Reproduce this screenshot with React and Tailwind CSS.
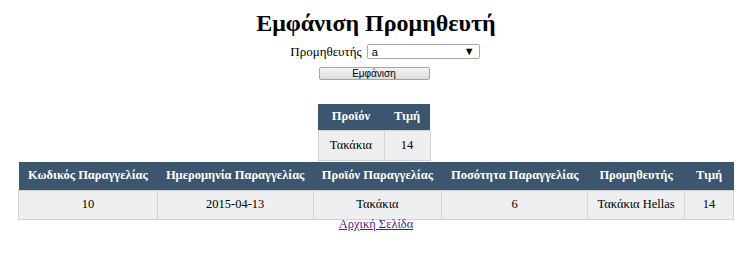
import React from "react";

const serif = "font-['Liberation_Serif','Times_New_Roman',serif]";

const orderCols = [
  { label: "Κωδικός Παραγγελίας", w: "w-[139px]" },
  { label: "Ημερομηνία Παραγγελίας", w: "w-[156px]" },
  { label: "Προϊόν Παραγγελίας", w: "w-[129px]" },
  { label: "Ποσότητα Παραγγελίας", w: "w-[146px]" },
  { label: "Προμηθευτής", w: "w-[97px]" },
  { label: "Τιμή", w: "w-[49px]" },
];

const orderRow = ["10", "2015-04-13", "Τακάκια", "6", "Τακάκια Hellas", "14"];

const App = () => {
  return (
    <div className={`${serif} min-h-screen bg-white text-black pl-[18px] pr-[7px] pt-[8px]`}>
      <h1 className="text-center text-[24px] font-bold leading-[30px]">
        Εμφάνιση Προμηθευτή
      </h1>

      <div className="mt-[4px] flex items-center justify-center pl-[18px] gap-[5px] text-[13px]">
        <span>Προμηθευτής</span>
        <div className="relative w-[113px] h-[15px] border border-[#a9a9a9] rounded-[2px] bg-white flex items-center px-[4px] font-['Liberation_Sans',Arial,sans-serif] text-[11px]">
          <span>a</span>
          <span className="absolute right-[4px] top-[0px] text-[11px] leading-[13px]">▼</span>
        </div>
      </div>

      <div className="mt-[5px] flex justify-center pr-[4px]">
        <button
          type="button"
          className="w-[111px] h-[13px] border border-[#a6a6a6] rounded-[2px] bg-gradient-to-b from-[#f4f4f4] to-[#dedede] font-['Liberation_Sans',Arial,sans-serif] text-[10px] leading-[11px] text-black"
        >
          Εμφάνιση
        </button>
      </div>

      <div className="mt-[24px] flex justify-center pr-[4px]">
        <table className={`${serif} border-collapse text-[12.5px]`}>
          <thead>
            <tr className="bg-[#3b566e] text-white h-[27px]">
              <th className="w-[66px] font-bold">Προϊόν</th>
              <th className="w-[46px] font-bold">Τιμή</th>
            </tr>
          </thead>
          <tbody>
            <tr className="bg-[#efeff1] h-[30px]">
              <td className="text-center border border-[#d3d3d3]">Τακάκια</td>
              <td className="text-center border border-[#d3d3d3]">14</td>
            </tr>
          </tbody>
        </table>
      </div>

      <table className={`${serif} mt-[1px] w-[716px] border-collapse text-[12.5px]`}>
        <thead>
          <tr className="bg-[#3b566e] text-white h-[28px]">
            {orderCols.map((c) => (
              <th key={c.label} className={`${c.w} font-bold text-center`}>
                {c.label}
              </th>
            ))}
          </tr>
        </thead>
        <tbody>
          <tr className="bg-[#efeff1] h-[29px]">
            {orderRow.map((v, i) => (
              <td key={i} className="text-center border border-[#d3d3d3]">
                {v}
              </td>
            ))}
          </tr>
        </tbody>
      </table>

      <div className="text-center text-[12.5px] leading-[13px] -mt-[2px]">
        <a href="#" className="text-[#551a8b] underline">
          Αρχική Σελίδα
        </a>
      </div>
    </div>
  );
};

export default App;
